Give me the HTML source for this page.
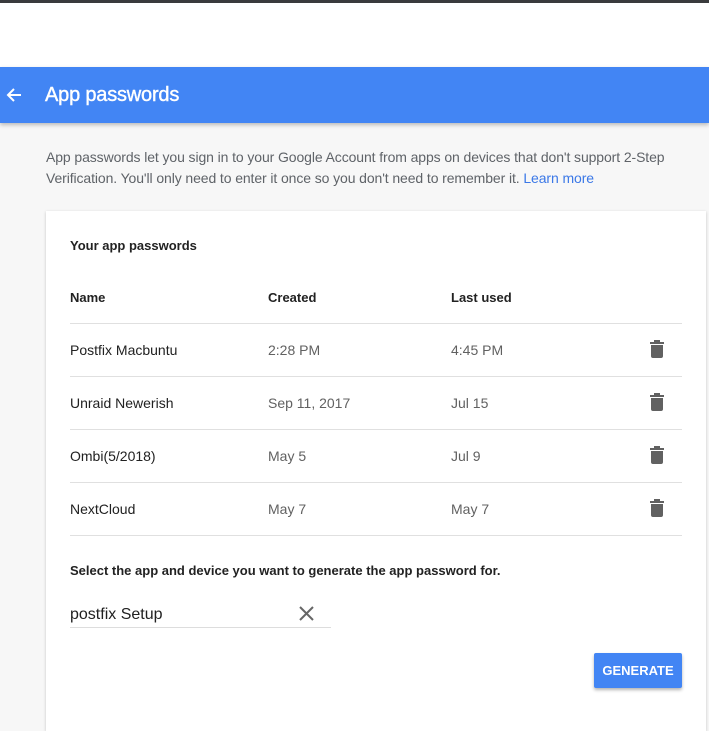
<!DOCTYPE html>
<html><head><style>
*{margin:0;padding:0;box-sizing:border-box}
body{width:709px;height:716px;overflow:hidden;background:#f7f7f7;font-family:"Liberation Sans",sans-serif;position:relative}
.top{position:absolute;left:0;top:0;width:709px;height:67px;background:#fff;border-top:3px solid #3a3b3d}
.bar{position:absolute;left:0;top:67px;width:709px;height:56px;background:#4285f4;box-shadow:0 2px 4px rgba(0,0,0,.25)}
.bar .t{position:absolute;left:45px;top:17px;color:#fff;font-size:20px;letter-spacing:-.2px;-webkit-text-stroke:.4px #fff}
.bar svg{position:absolute;left:4px;top:18px}
.intro{position:absolute;left:46px;top:147px;width:645px;font-size:14px;line-height:21px;color:#5f6368;letter-spacing:-.1px}
.intro a{color:#3b78e7;text-decoration:none}
.card{position:absolute;left:46px;top:211px;width:660px;height:520px;background:#fff;box-shadow:0 1px 3px rgba(0,0,0,.2)}
.abs{position:absolute;font-size:14px;color:#212121}
.h{font-weight:bold;font-size:13px;color:#222}
.line{position:absolute;left:24px;width:612px;height:1px;background:#e0e0e0}
.g{color:#616161}
.trash{position:absolute;left:604px}
.btn{position:absolute;left:548px;top:442px;width:88px;height:35px;background:#4285f4;border-radius:2px;color:#fff;font-size:13px;font-weight:bold;text-align:center;line-height:35px;box-shadow:0 2px 3px rgba(0,0,0,.3)}
</style></head><body>
<div class="top"></div>
<div class="bar"><svg width="20" height="20" viewBox="0 0 20 20"><path d="M17 10H4M10 4L4 10l6 6" stroke="#fff" stroke-width="2" fill="none"/></svg><div class="t">App passwords</div></div>
<div class="intro">App passwords let you sign in to your Google Account from apps on devices that don't support 2-Step Verification. You'll only need to enter it once so you don't need to remember it. <a>Learn more</a></div>
<div class="card">
<div class="abs h" style="left:24px;top:27px">Your app passwords</div>
<div class="abs h" style="left:24px;top:79px">Name</div>
<div class="abs h" style="left:222px;top:79px">Created</div>
<div class="abs h" style="left:405px;top:79px">Last used</div>
<div class="line" style="top:112px"></div>
<div class="abs" style="left:24px;top:131px">Postfix Macbuntu</div><div class="abs g" style="left:222px;top:131px">2:28 PM</div><div class="abs g" style="left:405px;top:131px">4:45 PM</div>
<div class="line" style="top:165px"></div>
<div class="abs" style="left:24px;top:184px">Unraid Newerish</div><div class="abs g" style="left:222px;top:184px">Sep 11, 2017</div><div class="abs g" style="left:405px;top:184px">Jul 15</div>
<div class="line" style="top:218px"></div>
<div class="abs" style="left:24px;top:237px">Ombi(5/2018)</div><div class="abs g" style="left:222px;top:237px">May 5</div><div class="abs g" style="left:405px;top:237px">Jul 9</div>
<div class="line" style="top:271px"></div>
<div class="abs" style="left:24px;top:290px">NextCloud</div><div class="abs g" style="left:222px;top:290px">May 7</div><div class="abs g" style="left:405px;top:290px">May 7</div>
<div class="line" style="top:324px"></div>
<svg class="trash" style="top:129px" width="14" height="18" viewBox="0 0 14 18"><path d="M4 0h6v2h4v2H0V2h4zM1 5h12v11a2 2 0 0 1-2 2H3a2 2 0 0 1-2-2z" fill="#616161"/></svg>
<svg class="trash" style="top:182px" width="14" height="18" viewBox="0 0 14 18"><path d="M4 0h6v2h4v2H0V2h4zM1 5h12v11a2 2 0 0 1-2 2H3a2 2 0 0 1-2-2z" fill="#616161"/></svg>
<svg class="trash" style="top:235px" width="14" height="18" viewBox="0 0 14 18"><path d="M4 0h6v2h4v2H0V2h4zM1 5h12v11a2 2 0 0 1-2 2H3a2 2 0 0 1-2-2z" fill="#616161"/></svg>
<svg class="trash" style="top:288px" width="14" height="18" viewBox="0 0 14 18"><path d="M4 0h6v2h4v2H0V2h4zM1 5h12v11a2 2 0 0 1-2 2H3a2 2 0 0 1-2-2z" fill="#616161"/></svg>
<div class="abs h" style="left:24px;top:352px;font-size:13px">Select the app and device you want to generate the app password for.</div>
<div class="abs" style="left:24px;top:395px;font-size:16px">postfix Setup</div>
<svg style="position:absolute;left:253px;top:395px" width="15" height="15" viewBox="0 0 15 15"><path d="M1 1L14 14M14 1L1 14" stroke="#666" stroke-width="2"/></svg>
<div style="position:absolute;left:24px;top:416px;width:261px;height:1px;background:#ddd"></div>
<div class="btn">GENERATE</div>
</div>
</body></html>
